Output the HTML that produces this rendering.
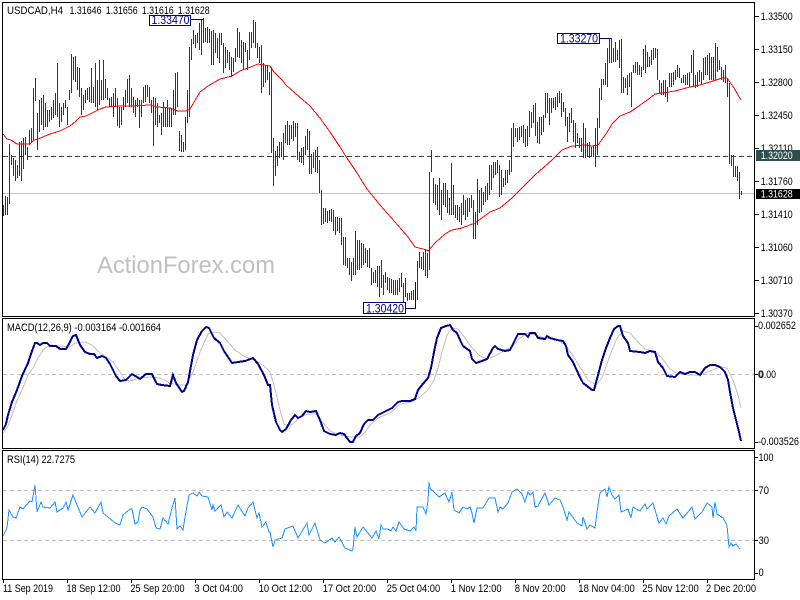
<!DOCTYPE html>
<html><head><meta charset="utf-8"><title>USDCAD,H4</title>
<style>
html,body{margin:0;padding:0;background:#fff;width:800px;height:600px;overflow:hidden}
svg{display:block;font-family:"Liberation Sans",Arial,sans-serif;font-size:11px;fill:#000}
.c{shape-rendering:crispEdges;fill:none}
</style></head><body>
<svg width="800" height="600" viewBox="0 0 800 600" xmlns="http://www.w3.org/2000/svg">
<rect width="800" height="600" fill="#fff"/>
<!-- levels -->
<path class="c" d="M3 193.5H754" stroke="#c0c0c0"/>
<path class="c" d="M3 156.5H754" stroke="#2f4f4f" stroke-dasharray="5 3"/>
<path class="c" d="M3 374.5H754M3 490.5H754M3 540.5H754" stroke="#c0c0c0" stroke-dasharray="4 3"/>
<!-- bars -->
<path class="c" transform="translate(.5 0)" stroke="#0f4060" d="M3 205V216M5 196V215M7 197V215M9 144V204M11 155V165M13 158V176M15 160V181M17 165V178M19 142V176M21 141V181M23 138V169M25 137V155M27 147V160M29 130V145M31 128V142M33 88V140M35 78V101M37 113V150M39 100V132M41 98V125M43 95V130M45 103V127M47 110V127M49 110V122M51 107V120M53 100V118M55 93V115M57 63V117M59 103V127M61 107V122M63 103V115M65 100V108M67 107V125M69 90V100M71 54V93M73 57V80M75 56V82M77 67V90M79 68V97M81 88V115M83 95V110M85 90V103M87 88V100M89 87V102M91 68V103M93 87V103M95 63V107M97 80V110M99 60V105M101 80V100M103 60V100M105 79V98M107 88V100M109 98V107M111 97V107M113 93V117M115 88V107M117 98V126M119 107V128M121 107V125M123 97V110M125 90V107M127 79V103M129 75V107M131 88V107M133 97V113M135 100V117M137 98V107M139 100V128M141 100V117M143 87V103M145 85V102M147 85V97M149 87V103M151 100V113M153 97V146M155 98V125M157 103V127M159 115V123M161 113V135M163 102V127M165 108V127M167 100V127M169 108V127M171 108V127M173 90V115M175 73V115M177 72V107M179 131V151M181 135V152M183 142V152M185 117V150M187 90V123M189 47V117M191 39V60M193 30V44M195 35V48M197 33V43M199 23V50M201 19V55M203 18V43M205 28V42M207 27V43M209 29V43M211 31V65M213 30V65M215 33V53M217 38V58M219 33V63M221 33V45M223 43V73M225 47V68M227 50V63M229 52V70M231 57V77M233 58V72M235 48V62M237 28V57M239 32V58M241 40V63M243 42V70M245 43V52M247 50V70M249 32V60M251 32V48M253 20V43M255 22V48M257 43V58M259 47V63M261 45V93M263 63V87M265 65V83M267 65V80M269 72V95M271 67V153M273 138V186M275 151V176M277 146V166M279 142V158M281 142V157M283 133V160M285 125V143M287 121V145M289 125V145M291 125V139M293 121V141M295 123V137M297 123V160M299 152V162M301 148V163M303 147V165M305 136V155M307 129V150M309 131V174M311 154V174M313 152V168M315 150V172M317 147V173M319 160V193M321 190V225M323 208V224M325 208V222M327 211V223M329 210V221M331 209V222M333 210V231M335 217V235M337 217V231M339 218V233M341 218V245M343 237V265M345 237V266M347 258V268M349 258V275M351 262V281M353 258V275M355 231V275M357 240V270M359 240V270M361 243V268M363 244V265M365 248V263M367 250V267M369 248V268M371 268V285M373 272V283M375 270V283M377 266V287M379 266V297M381 260V288M383 275V295M385 272V283M387 277V290M389 278V293M391 279V293M393 280V295M395 280V295M397 280V295M399 278V292M401 273V287M403 283V302M405 278V297M407 293V301M409 293V300M411 291V300M413 290V300M415 282V300M417 261V300M419 252V268M421 257V269M423 252V270M425 250V276M427 253V278M429 172V270M431 150V172M433 178V203M435 184V205M437 185V210M439 178V215M441 190V220M443 183V205M445 183V207M447 190V213M449 198V215M451 163V215M453 185V215M455 205V218M457 205V220M459 207V222M461 203V225M463 195V215M465 200V220M467 198V217M469 198V212M471 195V208M473 200V239M475 212V239M477 179V225M479 190V213M481 188V212M483 192V205M485 186V202M487 183V200M489 165V195M491 165V190M493 162V178M495 162V175M497 160V173M499 165V197M501 170V195M503 178V187M505 170V185M507 170V183M509 160V175M511 128V172M513 123V147M515 128V137M517 128V142M519 127V140M521 126V137M523 125V143M525 129V147M527 126V146M529 111V137M531 112V128M533 105V123M535 103V136M537 122V143M539 117V144M541 117V135M543 115V132M545 93V118M547 93V113M549 98V125M551 98V113M553 98V108M555 97V110M557 93V107M559 91V103M561 93V117M563 102V112M565 108V126M567 117V142M569 113V132M571 108V123M573 120V142M575 123V148M577 133V143M579 138V148M581 138V152M583 123V158M585 128V158M587 143V157M589 142V158M591 147V157M593 145V157M595 128V167M597 118V155M599 88V128M601 79V100M603 79V85M605 63V85M607 48V87M609 38V63M611 38V63M613 48V62M615 42V62M617 50V60M619 40V68M621 39V93M623 77V93M625 78V88M627 75V95M629 73V87M631 72V107M633 65V73M635 62V73M637 62V75M639 65V75M641 67V77M643 49V70M645 45V73M647 52V67M649 57V67M651 50V65M653 48V60M655 48V58M657 49V80M659 80V93M661 83V95M663 80V95M665 80V97M667 87V102M669 73V87M671 73V87M673 72V85M675 70V80M677 65V77M679 68V78M681 78V83M683 75V83M685 75V85M687 73V85M689 72V87M691 55V73M693 50V87M695 75V88M697 72V87M699 70V82M701 72V85M703 58V80M705 57V75M707 55V75M709 53V80M711 57V80M713 57V80M715 43V80M717 47V72M719 60V70M721 67V80M723 70V82M725 65V83M727 78V97M729 83V164M731 155V166M733 155V177M735 166V177M737 166V181M739 172V199M741 191V195"/>
<!-- moving average -->
<polyline class="c" stroke="#f00" points="3,134 7,139 11,140 17,144 30,144 34,140 38,139 50,134 60,131 70,126 76,121 80,117 86,116 100,109 106,107 120,106 130,106 150,105 157,107 170,108 178,111 186,111 190,109 200,92 208,86 220,79 232,76 240,71 248,68 258,64 270,66 274,72 282,80 286,85 295,93 303,100 310,106 320,118 330,132 340,147 345,155 357,173 367,189 380,205 395,222 408,237 415,247 427,250 428,251 435,243 445,234 452,230 462,228 475,223 490,212 500,208 512,198 520,190 535,175 552,160 562,150 572,146 585,145 592,146 598,145 606,134 612,124 620,116 630,112 636,108 650,98 655,94 662,93 675,91 690,87 700,85 710,82 722,78 727,78 734,88 741,100"/>
<!-- MACD signal -->
<polyline class="c" stroke="#c0c0c0" points="3,433 7,428 11,418 16,403 22,390 28,375 33,368 38,358 43,350 50,345 60,346 70,347 75,343 85,342 92,345 100,353 105,356 113,362 120,372 125,380 130,381 140,378 150,377 160,378 170,383 178,385 186,385 193,372 200,352 208,334 214,332 220,333 227,341 235,350 245,357 255,360 263,365 270,372 274,385 280,410 284,424 288,426 293,424 300,417 308,414 316,414 323,423 330,431 340,435 350,437 360,437 365,432 370,425 378,418 390,413 400,404 412,402 420,397 428,390 434,380 438,368 442,352 447,335 452,328 458,329 465,338 472,348 480,356 487,359 495,356 505,350 512,347 520,338 528,333 545,338 558,340 565,345 572,354 580,367 588,380 596,385 602,378 610,355 617,338 623,331 630,333 638,342 645,349 655,352 662,358 670,369 678,374 690,375 700,375 710,371 720,367 727,368 733,380 738,395 741,408"/>
<!-- MACD main -->
<polyline class="c" stroke="#00008b" stroke-width="2" points="3,430 6,424 8,415 12,402 17,390 22,376 28,363 32,351 35,343 37,343 40,345 43,343 47,343 50,346 56,346 60,349 66,349 70,342 73,336 76,335 80,345 85,352 90,354 94,354 97,358 102,356 106,358 110,364 116,376 120,381 126,380 132,374 137,377 140,379 146,374 152,374 157,384 162,385 170,386 173,375 176,383 182,392 184,391 188,382 193,355 197,340 202,331 206,327 209,328 214,338 220,343 224,351 232,363 238,362 245,361 253,358 258,364 264,375 268,385 270,385 272,405 276,422 280,430 282,432 286,429 291,420 295,415 298,418 302,416 306,411 310,412 316,411 320,420 324,431 330,434 336,435 340,433 344,434 350,442 353,442 356,436 360,433 364,424 368,420 373,420 378,415 384,412 392,408 398,402 402,401 410,401 415,399 418,390 422,385 428,378 431,368 434,352 437,338 441,328 446,326 450,325 453,330 457,333 460,340 463,346 470,351 472,359 476,363 482,361 487,359 493,348 495,346 498,349 505,351 510,350 515,340 518,334 525,334 528,337 530,333 535,333 538,338 545,339 547,336 550,338 557,340 563,341 566,346 568,355 573,362 578,373 583,383 587,386 592,390 594,390 598,375 602,360 606,348 610,338 614,329 618,326 620,326 623,336 628,343 630,351 640,352 645,353 650,351 655,352 658,362 663,368 667,376 675,377 678,374 680,372 685,374 690,372 695,372 700,375 705,368 710,365 715,365 720,367 725,372 728,380 730,392 733,408 736,420 739,432 741,441"/>
<!-- RSI -->
<polyline class="c" stroke="#1e90ff" points="3,536 7,528 9,510 13,517 16,518 20,507 23,509 30,501 32,502 35,485 37,512 41,502 43,507 50,508 55,502 57,512 63,508 66,502 68,510 73,495 77,505 82,517 90,507 95,513 101,502 103,513 108,517 115,523 120,525 123,515 130,509 132,509 135,524 138,522 140,510 142,507 147,509 153,517 156,528 160,529 163,518 168,524 172,508 175,498 177,529 180,526 183,530 185,517 189,495 193,493 197,496 199,492 202,496 208,497 212,510 213,505 215,511 221,505 224,517 227,512 232,518 238,505 245,516 248,508 253,502 257,518 259,513 262,527 266,522 269,532 270,532 273,547 275,540 282,538 285,529 293,526 298,538 307,523 309,535 312,529 315,523 320,540 325,543 332,538 335,542 339,537 345,548 352,551 353,549 355,527 357,537 363,527 372,538 376,531 379,539 381,525 383,529 388,529 391,531 393,527 396,531 399,522 404,529 410,531 414,527 416,531 417,507 423,507 426,514 428,501 429,482 430,488 433,491 439,497 445,493 449,502 452,492 454,510 459,513 463,507 467,509 470,507 472,513 474,523 477,508 483,508 489,498 495,498 498,512 500,507 503,509 508,503 512,492 517,489 522,494 525,502 528,492 530,495 533,492 535,507 538,506 545,493 549,505 555,498 560,500 563,507 567,520 569,512 577,523 582,526 583,517 587,529 590,525 595,528 598,505 600,493 605,489 607,497 609,487 612,495 615,499 619,495 621,512 628,509 631,518 633,507 640,511 645,504 647,509 653,503 658,520 659,523 663,518 666,524 669,516 677,509 683,518 692,507 695,519 702,512 707,503 712,507 713,518 715,502 717,514 723,518 727,525 729,547 731,543 733,546 736,544 740,549"/>
<!-- watermark -->
<text x="97" y="273" font-size="24" fill="#c0c0c0" textLength="178" lengthAdjust="spacingAndGlyphs">ActionForex.com</text>
<!-- panel frames -->
<g class="c" stroke="#000">
<rect x="2.5" y="2.5" width="752" height="314"/>
<rect x="2.5" y="318.5" width="752" height="130"/>
<rect x="2.5" y="450.5" width="752" height="129"/>
<path d="M755 16.5h4M755 49.5h4M755 82.5h4M755 115.5h4M755 148.5h4M755 181.5h4M755 214.5h4M755 247.5h4M755 280.5h4M755 313.5h4M755 326.5h3M755 374.5h3M755 442.5h3M755 457.5h3M755 490.5h3M755 540.5h3M755 573.5h3"/>
<path d="M3.5 580v3M67.5 580v3M131.5 580v3M195.5 580v3M259.5 580v3M323.5 580v3M387.5 580v3M451.5 580v3M515.5 580v3M579.5 580v3M643.5 580v3M707.5 580v3"/>
</g>
<!-- price highlight boxes -->
<rect x="756" y="150" width="44" height="11" fill="#2f4f4f"/>
<rect x="756" y="189" width="44" height="10" fill="#000"/>
<!-- callouts -->
<g class="c" stroke="#000080">
<rect x="149.5" y="15.5" width="41" height="10" fill="#fff"/>
<path d="M191 19.5H203"/>
<rect x="557.5" y="33.5" width="42" height="10" fill="#fff"/>
<path d="M600 38.5H611"/>
<rect x="363.5" y="302.5" width="42" height="11" fill="#fff"/>
<path d="M406 308.5H415.5V282"/>
</g>
<g font-size="12" fill="#000080">
<text x="151.5" y="24" textLength="38" lengthAdjust="spacingAndGlyphs">1.33470</text>
<text x="560" y="42.5" textLength="38" lengthAdjust="spacingAndGlyphs">1.33270</text>
<text x="366" y="312.5" textLength="38" lengthAdjust="spacingAndGlyphs">1.30420</text>
</g>
<!-- headers -->
<text x="7" y="14" textLength="56" lengthAdjust="spacingAndGlyphs">USDCAD,H4</text>
<text x="69.5" y="14" textLength="32" lengthAdjust="spacingAndGlyphs">1.31646</text>
<text x="105.7" y="14" textLength="32" lengthAdjust="spacingAndGlyphs">1.31656</text>
<text x="141.7" y="14" textLength="32" lengthAdjust="spacingAndGlyphs">1.31616</text>
<text x="177.7" y="14" textLength="32" lengthAdjust="spacingAndGlyphs">1.31628</text>
<text x="7" y="331" textLength="154" lengthAdjust="spacingAndGlyphs">MACD(12,26,9) -0.003164 -0.001664</text>
<text x="7" y="463" textLength="68" lengthAdjust="spacingAndGlyphs">RSI(14) 22.7275</text>
<!-- y axis -->
<g>
<text x="760.7" y="20" textLength="32" lengthAdjust="spacingAndGlyphs">1.33500</text>
<text x="760.7" y="53" textLength="32" lengthAdjust="spacingAndGlyphs">1.33150</text>
<text x="760.7" y="86" textLength="32" lengthAdjust="spacingAndGlyphs">1.32800</text>
<text x="760.7" y="119" textLength="32" lengthAdjust="spacingAndGlyphs">1.32450</text>
<text x="760.7" y="152" textLength="32" lengthAdjust="spacingAndGlyphs">1.32110</text>
<rect x="756" y="150" width="44" height="11" fill="#2f4f4f"/>
<text x="760.7" y="159" fill="#fff" textLength="32" lengthAdjust="spacingAndGlyphs">1.32020</text>
<text x="760.7" y="185" textLength="32" lengthAdjust="spacingAndGlyphs">1.31760</text>
<text x="760.7" y="197.5" fill="#fff" textLength="32" lengthAdjust="spacingAndGlyphs">1.31628</text>
<text x="760.7" y="218" textLength="32" lengthAdjust="spacingAndGlyphs">1.31410</text>
<text x="760.7" y="251" textLength="32" lengthAdjust="spacingAndGlyphs">1.31060</text>
<text x="760.7" y="284" textLength="32" lengthAdjust="spacingAndGlyphs">1.30710</text>
<text x="760.7" y="317" textLength="32" lengthAdjust="spacingAndGlyphs">1.30370</text>
<text x="758" y="329" textLength="38" lengthAdjust="spacingAndGlyphs">0.002652</text>
<text x="758" y="378" textLength="5" lengthAdjust="spacingAndGlyphs">0</text>
<text x="759" y="378" textLength="17" lengthAdjust="spacingAndGlyphs">0.00</text>
<text x="758" y="445" textLength="41" lengthAdjust="spacingAndGlyphs">-0.003526</text>
<text x="758.5" y="461" textLength="15" lengthAdjust="spacingAndGlyphs">100</text>
<text x="758.5" y="494" textLength="10.5" lengthAdjust="spacingAndGlyphs">70</text>
<text x="758.5" y="544" textLength="10.5" lengthAdjust="spacingAndGlyphs">30</text>
<text x="758.5" y="576" textLength="5.2" lengthAdjust="spacingAndGlyphs">0</text>
</g>
<!-- time axis -->
<g>
<text x="3" y="592" textLength="50" lengthAdjust="spacingAndGlyphs">11 Sep 2019</text>
<text x="66.5" y="592" textLength="54" lengthAdjust="spacingAndGlyphs">18 Sep 12:00</text>
<text x="130.5" y="592" textLength="54" lengthAdjust="spacingAndGlyphs">25 Sep 20:00</text>
<text x="194.5" y="592" textLength="48.5" lengthAdjust="spacingAndGlyphs">3 Oct 04:00</text>
<text x="258.7" y="592" textLength="53.5" lengthAdjust="spacingAndGlyphs">10 Oct 12:00</text>
<text x="322.7" y="592" textLength="53.5" lengthAdjust="spacingAndGlyphs">17 Oct 20:00</text>
<text x="386.7" y="592" textLength="53.5" lengthAdjust="spacingAndGlyphs">25 Oct 04:00</text>
<text x="450.7" y="592" textLength="51" lengthAdjust="spacingAndGlyphs">1 Nov 12:00</text>
<text x="514.7" y="592" textLength="51" lengthAdjust="spacingAndGlyphs">8 Nov 20:00</text>
<text x="578.3" y="592" textLength="56.5" lengthAdjust="spacingAndGlyphs">18 Nov 04:00</text>
<text x="642.3" y="592" textLength="56.5" lengthAdjust="spacingAndGlyphs">25 Nov 12:00</text>
<text x="706" y="592" textLength="50" lengthAdjust="spacingAndGlyphs">2 Dec 20:00</text>
</g>
</svg>
</body></html>
